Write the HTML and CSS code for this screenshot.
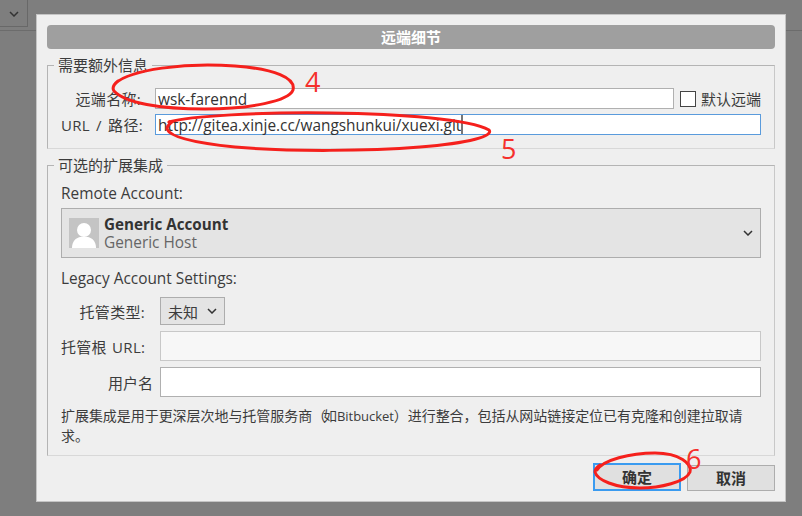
FILE: index.html
```html
<!DOCTYPE html>
<html lang="zh">
<head>
<meta charset="utf-8">
<title>远端细节</title>
<link rel="stylesheet" href="styles.css">
</head>
<body>
<div class="backdrop">
  <div class="toolbar">
    <div class="tool-btn"><svg class="chev" width="10" height="6" viewBox="0 0 10 6"><path d="M1 1l4 4 4-4"/></svg></div>
  </div>
  <div class="dialog">
    <div class="title">远端细节</div>
    <fieldset class="group first">
      <legend>需要额外信息</legend>
      <div class="row r1">
        <label class="lbl l-name">远端名称:</label>
        <div class="input name">wsk-farennd</div>
        <span class="check"></span>
        <span class="check-label">默认远端</span>
      </div>
      <div class="row r2">
        <label class="lbl l-name">URL / 路径:</label>
        <div class="input url">http://gitea.xinje.cc/wangshunkui/xuexi.git<span class="caret"></span></div>
      </div>
    </fieldset>
    <fieldset class="group second">
      <legend>可选的扩展集成</legend>
      <div class="plain">Remote Account:</div>
      <div class="account">
        <svg class="avatar" width="30" height="30" viewBox="0 0 30 30"><rect width="30" height="30" fill="#c4c4c4"/><circle cx="15" cy="12" r="7" fill="#fff"/><path d="M3 30c0-7 4-10 8-11h8c4 1 8 4 8 11z" fill="#fff"/></svg>
        <div class="acc-text">
          <div class="acc-name">Generic Account</div>
          <div class="acc-host">Generic Host</div>
        </div>
        <svg class="chev" width="10" height="6" viewBox="0 0 10 6"><path d="M1 1l4 4 4-4"/></svg>
      </div>
      <div class="plain legacy">Legacy Account Settings:</div>
      <div class="row r3">
        <label class="lbl l-host">托管类型:</label>
        <div class="select">未知<svg class="chev" width="10" height="6" viewBox="0 0 10 6"><path d="M1 1l4 4 4-4"/></svg></div>
      </div>
      <div class="row r4">
        <label class="lbl l-host">托管根 URL:</label>
        <div class="input tall disabled"></div>
      </div>
      <div class="row r4">
        <label class="lbl l-user">用户名</label>
        <div class="input tall"></div>
      </div>
      <p class="note">扩展集成是用于更深层次地与托管服务商（<span class="tight">如</span><span class="latin">Bitbucket</span>）进行整合，包括从网站链接定位已有克隆和创建拉取请求。</p>
    </fieldset>
    <div class="buttons">
      <div class="btn ok">确定</div>
      <div class="btn">取消</div>
    </div>
  </div>
  <svg class="marks" width="802" height="516" viewBox="0 0 802 516">
    <g class="ink">
      <path d="M116 83C130 70 185 62 235 66C275 69 296 78 293 90C289 101 250 109 205 109C160 109 125 103 114 91C112 88 113 85 118 81"/>
      <path d="M169 122C190 116 260 112 330 113C400 114 470 119 489 130C494 136 470 143 420 147C370 151 290 152 235 147C195 143 170 137 167 129C167 126 169 124 173 121"/>
      <path d="M597 470C603 460 630 453 655 453C680 453 692 464 690 472C686 482 660 488 640 488C615 488 597 480 595 472C595 469 597 467 600 465"/>
    </g>
    <text class="num" x="305" y="92">4</text>
    <text class="num" x="501" y="159">5</text>
    <text class="num" x="686" y="469">6</text>
  </svg>
</div>
</body>
</html>
```
FILE: styles.css
```css
* { box-sizing: border-box; }
html, body { margin: 0; padding: 0; }
body {
  width: 802px;
  height: 516px;
  overflow: hidden;
  font-family: "Open Sans", "Noto Sans CJK SC", sans-serif;
  font-size: 15px;
  color: #3c3c3c;
}
.backdrop {
  position: relative;
  width: 802px;
  height: 516px;
  background: #7e7e7e;
  padding-top: 14px;
}
.toolbar {
  position: absolute;
  left: 0;
  top: 0;
  width: 802px;
  height: 31px;
  border-bottom: 1px solid #6c6c6c;
}
.tool-btn {
  width: 28px;
  height: 27px;
  border-right: 1px solid #686868;
  border-bottom: 1px solid #686868;
  display: flex;
  align-items: center;
  justify-content: center;
  padding-top: 1px;
}
.chev { flex: none; fill: none; stroke: #333; stroke-width: 1.5; display: block; }
.dialog {
  position: relative;
  margin-left: 36px;
  width: 750px;
  height: 488px;
  background: #efefef;
  border: 1px solid #c4c4c4;
  padding: 10px 10px 0;
}
.title {
  height: 24px;
  border-radius: 4px;
  background: #9f9f9f;
  color: #fff;
  font-weight: 700;
  font-size: 15px;
  line-height: 24px;
  text-align: center;
}
.group {
  margin: 0;
  padding: 0;
  min-width: 0;
  border: 1px solid #b4b4b4;
  border-bottom-color: #d8d8d8;
  border-right-color: #c8c8c8;
}
.group legend {
  margin-left: -7px;
  padding: 0 4px;
  font-size: 15px;
  line-height: 20px;
  color: #3c3c3c;
}
.first { margin-top: 6px; height: 94px; padding: 13px 13px 0; }
.second { margin-top: 6px; height: 301px; padding: 9px 13px 0; }
.row { display: flex; align-items: center; }
.r1 { height: 21px; }
.r2 { height: 21px; margin-top: 5px; }
.lbl { flex: none; text-align: right; white-space: nowrap; letter-spacing: 0.3px; }
.l-name { width: 80px; margin-right: 14px; word-spacing: 2px; }
.l-host { width: 84px; margin-right: 15px; word-spacing: 1px; }
.l-user { width: 92px; margin-right: 7px; letter-spacing: 0; }
.input {
  height: 21px;
  background: #fff;
  border: 1px solid #b0b0b0;
  color: #333;
  padding-left: 2px;
  line-height: 21px;
  font-size: 15.4px;
  white-space: nowrap;
}
.name { width: 519px; }
.url { width: 606px; border-color: #5a9bdc; position: relative; }
.caret {
  display: inline-block;
  width: 2px;
  height: 19px;
  background: #777;
  vertical-align: top;
}
.check {
  flex: none;
  width: 16px;
  height: 16px;
  margin-left: 6px;
  background: #fff;
  border: 1px solid #444;
}
.check-label { margin-left: 5px; white-space: nowrap; }
.plain { line-height: 20px; height: 20px; font-size: 15.4px; }
.account {
  margin-top: 4px;
  height: 50px;
  width: 700px;
  background: #e4e4e4;
  border: 1px solid #adadad;
  display: flex;
  align-items: center;
  padding: 0 7px 0 7px;
}
.avatar { flex: none; }
.acc-text { flex: 1; margin-left: 5px; padding-top: 1px; }
.acc-name { font-weight: 700; font-size: 15.2px; line-height: 19px; color: #333; }
.acc-host { font-size: 15.4px; line-height: 18px; color: #666; }
.legacy { margin-top: 11px; }
.r3 { margin-top: 8px; height: 28px; }
.select {
  width: 65px;
  height: 28px;
  background: #e4e4e4;
  border: 1px solid #adadad;
  display: flex;
  align-items: center;
  justify-content: space-between;
  padding: 0 7px 0 7px;
}
.r4 { margin-top: 6px; }
.tall { height: 30px; width: 601px; }
.disabled { background: #f7f7f7; border-color: #c8c8c8; }
.note {
  margin: 9px 0 0;
  width: 690px;
  font-size: 14px;
  line-height: 19px;
  letter-spacing: -0.05px;
}
.tight { margin-left: -3px; }
.latin { font-size: 13px; }
.buttons {
  display: flex;
  justify-content: flex-end;
  align-items: flex-end;
  gap: 6px;
  margin-top: 6px;
  height: 29px;
}
.btn {
  width: 88px;
  height: 26px;
  background: #e0e0e0;
  border: 1px solid #adadad;
  font-weight: 700;
  text-align: center;
  line-height: 24px;
  color: #333;
}
.ok { height: 28px; border: 2px solid #3a9bf0; line-height: 24px; }
.marks { position: absolute; left: 0; top: 0; pointer-events: none; }
.ink { fill: none; stroke: #f5201c; stroke-width: 3; stroke-linecap: round; }
.num { fill: #f5302c; font-family: "Open Sans", sans-serif; font-size: 27px; }
```
